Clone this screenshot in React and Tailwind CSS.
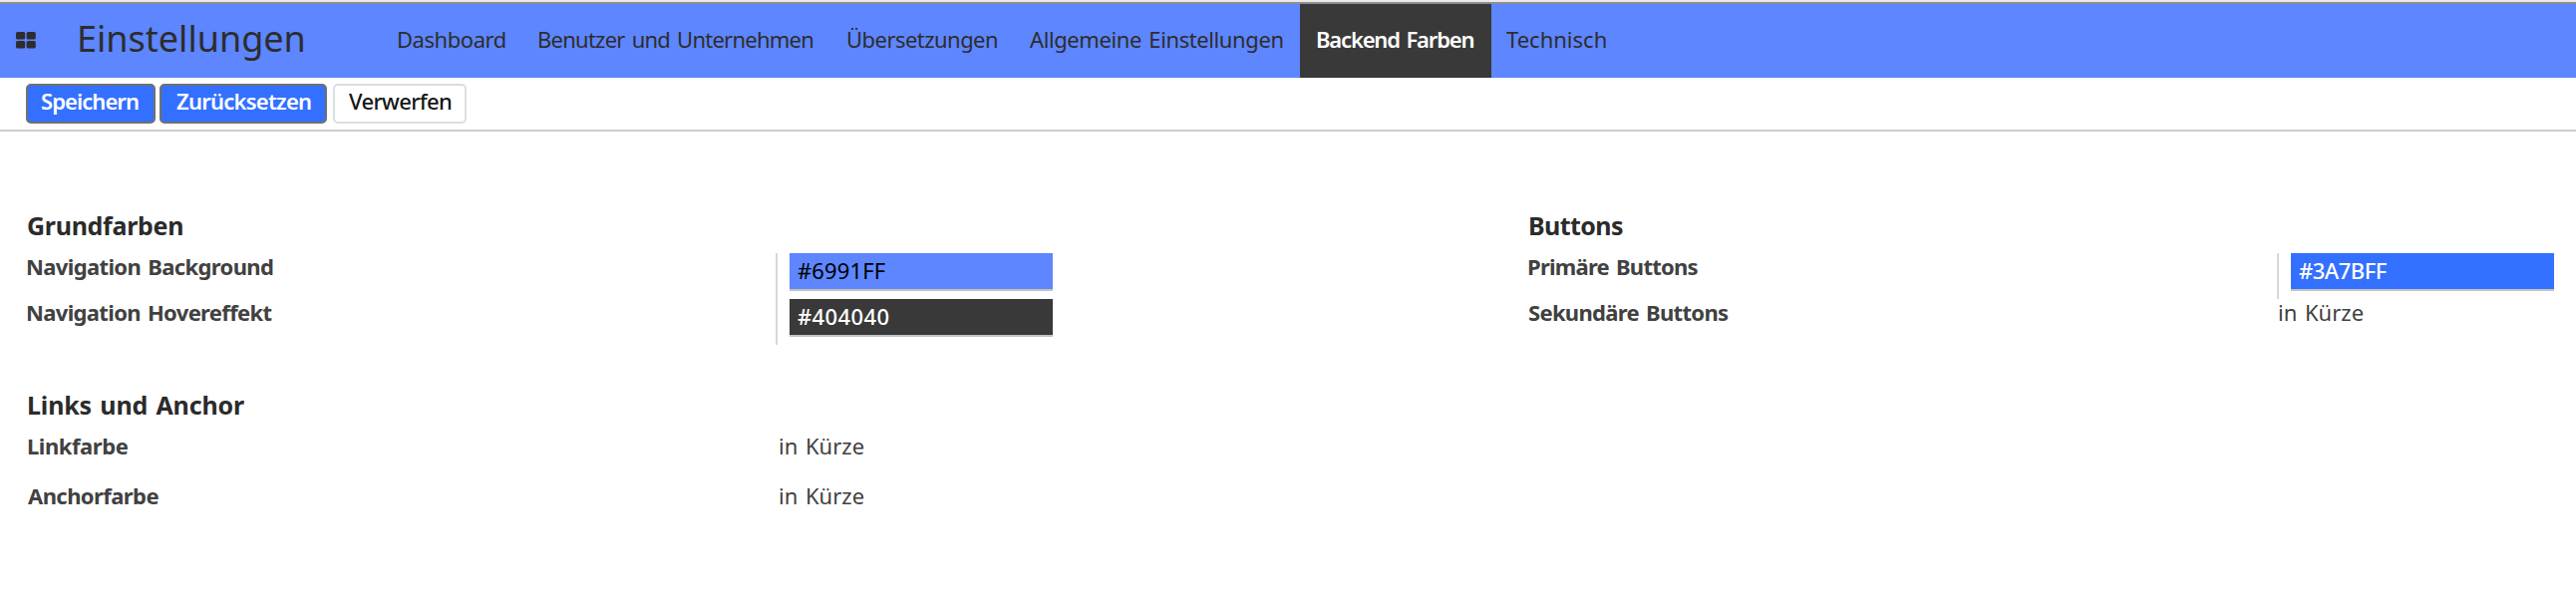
const navItems = [
  { label: "Dashboard", box: "w-[142px] pl-px", text: "tracking-[-0.45px]" },
  { label: "Benutzer und Unternehmen", box: "w-[310px]", text: "tracking-[-0.75px]" },
  { label: "Übersetzungen", box: "w-[184px]", text: "tracking-[-0.54px]" },
  { label: "Allgemeine Einstellungen", box: "w-[271px]", text: "tracking-[-0.4px]" },
  {
    label: "Backend Farben",
    box: "w-[192px] bg-[#393939] pl-[16px] font-semibold text-white",
    text: "tracking-[-1.17px]",
  },
  { label: "Technisch", box: "pl-[15px]", text: "" },
];

function GridIcon() {
  return (
    <svg width="20" height="17" viewBox="0 0 20 17" fill="#2d2d2d" aria-hidden="true">
      <rect x="0" y="0" width="9.2" height="7.6" rx="1.6" />
      <rect x="10.6" y="0" width="9.2" height="7.6" rx="1.6" />
      <rect x="0" y="9" width="9.2" height="7.6" rx="1.6" />
      <rect x="10.6" y="9" width="9.2" height="7.6" rx="1.6" />
    </svg>
  );
}

function Navbar() {
  return (
    <header className="flex h-[78px] border-t-2 border-[#ebebeb] text-[#2d2d2d]">
      <div className="flex w-full border-t-2 border-[#8e8e8e] bg-[#5d86ff]">
        <div className="flex w-[77px] shrink-0 pt-[28px] pl-[16px]">
          <GridIcon />
        </div>
        <h1 className="w-[320px] shrink-0 text-[36px] leading-[70px] whitespace-nowrap">Einstellungen</h1>
        <nav className="flex text-[22px] leading-[71px] whitespace-nowrap [word-spacing:2px]">
          {navItems.map((item) => (
            <a key={item.label} className={`block h-[74px] ${item.box}`}>
              <span className={item.text}>{item.label}</span>
            </a>
          ))}
        </nav>
      </div>
    </header>
  );
}

function Toolbar() {
  return (
    <div className="flex h-[54px] border-b-2 border-[#c9cdd3] pt-[6px] pl-[26px] text-[22px] leading-[31px] whitespace-nowrap">
      <button className="flex h-10 w-[130px] rounded-[5px] border-2 border-[#707070] bg-[#3370ff] pl-[13px] font-semibold tracking-[-0.94px] text-white">
        Speichern
      </button>
      <button className="ml-1 flex h-10 w-[168px] rounded-[5px] border-2 border-[#707070] bg-[#3370ff] pl-[15px] font-semibold tracking-[-0.76px] text-white">
        Zurücksetzen
      </button>
      <button className="ml-[6px] flex h-10 w-[134px] rounded-[5px] border-2 border-[#dadee2] bg-white pl-[14px] font-medium tracking-[-0.65px] text-[#161616]">
        Verwerfen
      </button>
    </div>
  );
}

function Heading({ className, children }) {
  return (
    <h2 className={`mb-[10px] pl-px text-[25px] leading-9 font-bold text-[#2b2b2b] ${className}`}>{children}</h2>
  );
}

function Row({ label, className, height = "h-[46px]", children }) {
  return (
    <div className={`flex ${height}`}>
      <div className={`w-[752px] shrink-0 font-bold ${className}`}>{label}</div>
      {children}
    </div>
  );
}

function ColorField({ value, className }) {
  return (
    <div className="h-full border-l-2 border-[#d8d8d8] pl-3">
      <div className={`h-[38px] w-[264px] border-b-2 border-[#c3c3c3] pl-2 leading-[35px] ${className}`}>{value}</div>
    </div>
  );
}

export default function App() {
  return (
    <div className="h-[598px] w-[2584px] overflow-hidden bg-white font-['Noto_Sans','Open_Sans',sans-serif]">
      <Navbar />
      <Toolbar />
      <main className="flex pt-[76px] pl-[26px] text-[22px] leading-[27px] whitespace-nowrap text-[#414141] [word-spacing:2px]">
        <div className="w-[1506px] shrink-0">
          <section>
            <Heading className="tracking-[-0.3px]">Grundfarben</Heading>
            <Row label="Navigation Background" className="tracking-[-0.63px]">
              <ColorField value="#6991FF" className="bg-[#5d86ff] tracking-[0.15px] text-black" />
            </Row>
            <Row label="Navigation Hovereffekt" className="tracking-[-0.66px]">
              <ColorField value="#404040" className="bg-[#393939] font-medium tracking-[0.4px] text-white" />
            </Row>
          </section>
          <section className="mt-[42px]">
            <Heading className="tracking-[-0.16px]">Links und Anchor</Heading>
            <Row label="Linkfarbe" className="pl-px tracking-[-0.45px]" height="h-[50px]">
              <div className="pl-[3px]">in Kürze</div>
            </Row>
            <Row label="Anchorfarbe" className="pl-[2px] tracking-[-0.58px]" height="h-[50px]">
              <div className="pl-[3px]">in Kürze</div>
            </Row>
          </section>
        </div>
        <section>
          <Heading className="tracking-[-0.58px]">Buttons</Heading>
          <Row label="Primäre Buttons" className="tracking-[-0.75px]">
            <ColorField value="#3A7BFF" className="bg-[#3370ff] font-medium tracking-[-0.5px] text-white" />
          </Row>
          <Row label="Sekundäre Buttons" className="pl-px tracking-[-0.68px]">
            <div className="pl-px">in Kürze</div>
          </Row>
        </section>
      </main>
    </div>
  );
}
